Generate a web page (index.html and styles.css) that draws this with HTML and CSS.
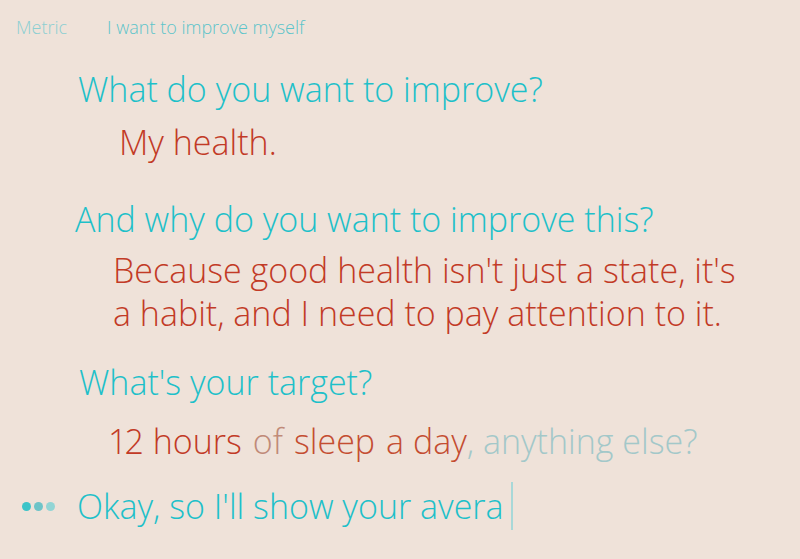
FILE: index.html
```html
<!DOCTYPE html>
<html>
<head>
<meta charset="utf-8">
<link rel="stylesheet" href="styles.css">
</head>
<body>
<div class="page">
  <nav class="crumbs">
    <span class="crumb crumb-muted">Metric</span>
    <span class="crumb">I want to improve myself</span>
  </nav>
  <div class="q q1">What do you want to improve?</div>
  <div class="a a1">My health.</div>
  <div class="q q2">And why do you want to improve this?</div>
  <div class="a a2">Because good health isn't just a state, it's<br>a habit, and I need to pay attention to it.</div>
  <div class="q q3">What's your target?</div>
  <div class="a a3"><span class="tok"><span class="num">12</span> hours</span><span class="filler">of</span><span class="tok tok2">sleep</span><span class="tok tok2">a day</span><span class="hint">, anything else?</span></div>
  <div class="typing">
    <span class="dots"><i class="dot d1"></i><i class="dot d2"></i><i class="dot d3"></i></span>
    <span class="q q4">Okay, so I'll show your avera</span><span class="cursor"></span>
  </div>
</div>
</body>
</html>
```
FILE: styles.css
```css
html, body {
  margin: 0;
  padding: 0;
  background: #efe2d9;
}
.page {
  width: 800px;
  height: 559px;
  font-family: "Open Sans", "DejaVu Sans", sans-serif;
  font-weight: 300;
  overflow: hidden;
}
.crumbs {
  display: flex;
  gap: 40px;
  padding: 15px 0 0 16px;
  font-size: 18px;
  line-height: 24px;
  color: #5cc4ca;
}
.crumb-muted {
  color: #8ccfd2;
}
.q {
  color: #1ec0c9;
  font-size: 34px;
  line-height: 44px;
}
.a {
  color: #c23a26;
  font-size: 34px;
  line-height: 43px;
}
.q1 { margin: 28px 0 0 78px; }
.a1 { margin: 10px 0 0 119px; }
.q2 { margin: 33px 0 0 75px; }
.a2 { margin: 8px 0 0 113px; }
.q3 { margin: 25px 0 0 79px; }
.a3 { margin: 16px 0 0 108px; display: flex; }
.num { letter-spacing: -3px; margin-right: 3px; }
.tok, .filler { margin-right: 11px; }
.filler { color: #c08a78; }
.tok2 { color: #c44d31; }
.tok2 + .tok2 { margin-right: 0; }
.hint { color: #a3c8c9; }
.typing {
  display: flex;
  align-items: center;
  margin-top: 19px;
  height: 48px;
}
.q4 { line-height: 48px; }
.dots {
  display: flex;
  gap: 3px;
  margin: 0 22px 0 22px;
}
.dot {
  display: block;
  width: 9px;
  height: 9px;
  border-radius: 50%;
}
.d1 { background: #3cc4c8; }
.d2 { background: #6ec4c8; }
.d3 { background: #92d5d5; }
.cursor {
  display: block;
  width: 2px;
  height: 48px;
  margin-left: 7px;
  background: #a8d8d8;
}
```
